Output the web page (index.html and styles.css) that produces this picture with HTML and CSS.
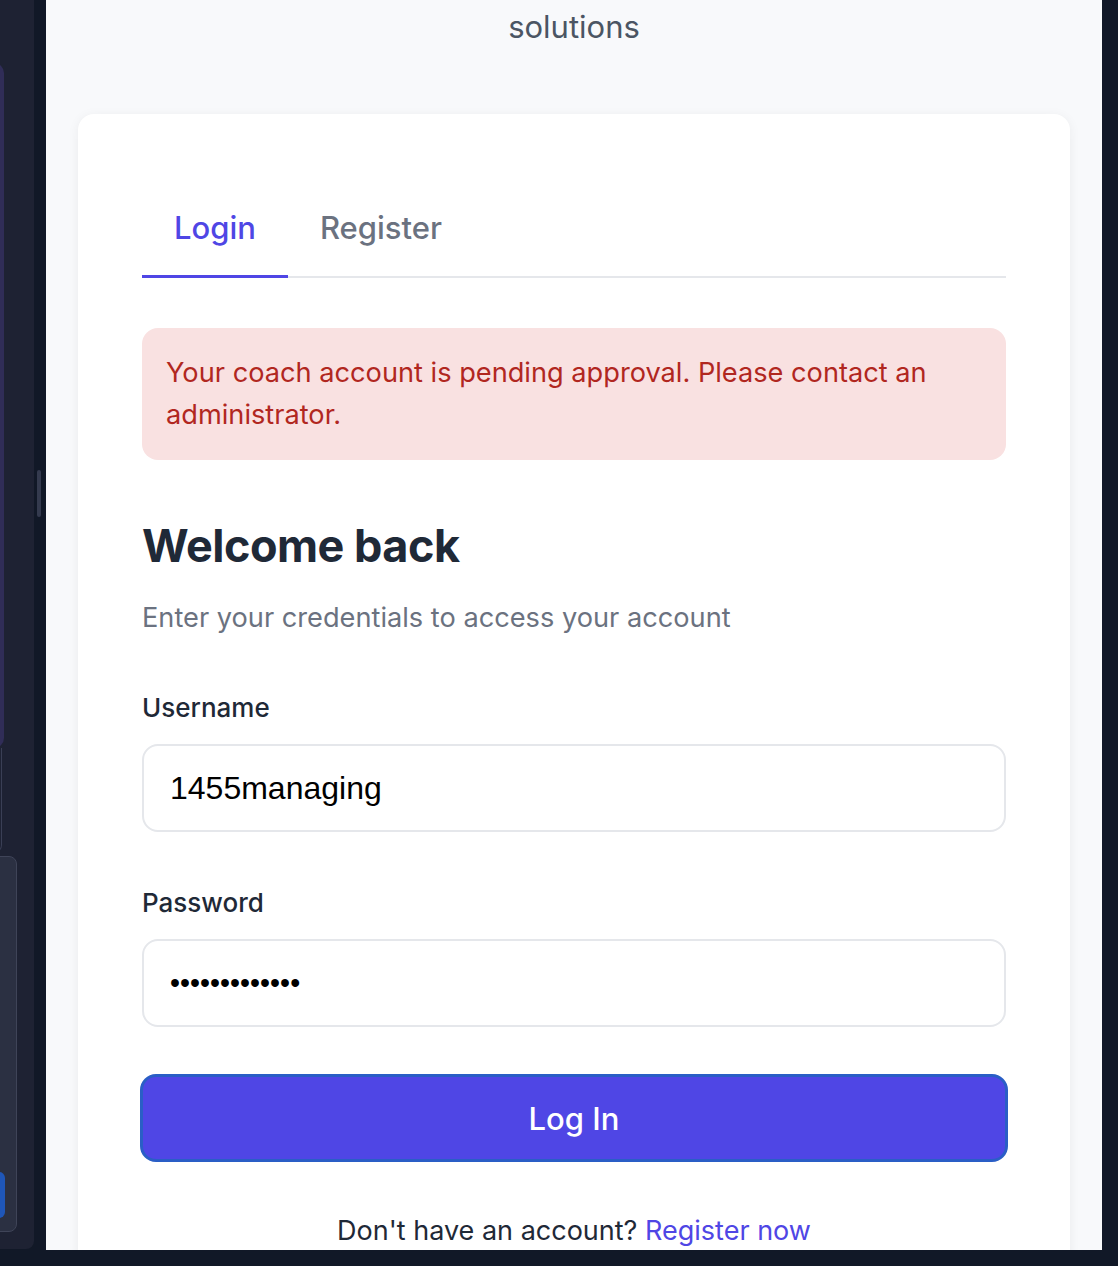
FILE: index.html
```html
<!DOCTYPE html>
<html lang="en">
<head>
<meta charset="utf-8">
<title>Login</title>
<link rel="stylesheet" href="styles.css">
</head>
<body>
<div class="app">
  <aside class="sidebar">
    <div class="side-box side-box-top"></div>
    <div class="side-line"></div>
    <div class="side-box side-box-bottom">
      <div class="side-btn"></div>
    </div>
  </aside>
  <div class="gutter"><div class="thumb"></div></div>
  <main class="main">
    <p class="subtitle">solutions</p>
    <section class="card">
      <nav class="tabs">
        <a class="tab active">Login</a>
        <a class="tab">Register</a>
      </nav>
      <div class="alert">Your coach account is pending approval. Please contact an administrator.</div>
      <h1 class="title">Welcome back</h1>
      <p class="lead">Enter your credentials to access your account</p>
      <form class="form">
        <label class="field">
          <span class="label">Username</span>
          <input class="input" type="text" value="1455managing">
        </label>
        <label class="field">
          <span class="label">Password</span>
          <input class="input input-password" type="password" value="abcdefghijklm">
        </label>
        <button class="btn" type="button">Log In</button>
      </form>
      <p class="footer">Don't have an account? <a class="link">Register now</a></p>
    </section>
  </main>
</div>
</body>
</html>
```
FILE: styles.css
```css
* { box-sizing: border-box; }
html, body { margin: 0; padding: 0; }
body {
  background: #111827;
  font-family: Inter, "Noto Sans", sans-serif;
  width: 1118px;
  height: 1266px;
  overflow: hidden;
}
.app {
  display: flex;
  height: 1250px;
  width: 1118px;
}
.sidebar {
  width: 34px;
  height: 1249px;
  background: #1e2233;
  border-bottom-right-radius: 8px;
  overflow: hidden;
  display: flex;
  flex-direction: column;
  flex-shrink: 0;
}
.side-box-top {
  margin-top: 63px;
  margin-left: -40px;
  width: 44px;
  height: 685px;
  background: #302d57;
  border-radius: 10px;
}
.side-line {
  margin-left: -40px;
  width: 42px;
  height: 105px;
  border-right: 1px solid #3a3f55;
  border-bottom: 1px solid #3a3f55;
  border-bottom-right-radius: 8px;
}
.side-box-bottom {
  margin-top: 3px;
  margin-left: -40px;
  width: 57px;
  height: 376px;
  background: #2b3042;
  border: 1px solid #3f4458;
  border-radius: 8px;
  display: flex;
  flex-direction: column;
  justify-content: flex-end;
  padding-bottom: 13px;
}
.side-btn {
  width: 44px;
  height: 46px;
  background: #1f56b8;
  border-radius: 6px;
}
.gutter {
  width: 12px;
  flex-shrink: 0;
  padding-top: 470px;
  display: flex;
  justify-content: center;
}
.thumb {
  width: 4px;
  height: 47px;
  border-radius: 2px;
  background: #343a4e;
  margin-left: -2px;
}
.main {
  width: 1056px;
  height: 1250px;
  background: #f8f9fb;
  flex-shrink: 0;
  overflow: hidden;
  padding: 0 32px;
}
.subtitle {
  margin: 0;
  padding-top: 8px;
  text-align: center;
  color: #4b5563;
  font-size: 31px;
  line-height: 38px;
  height: 114px;
}
.card {
  background: #fff;
  border-radius: 16px;
  box-shadow: 0 2px 12px rgba(17, 24, 39, 0.06);
  padding: 82px 64px 40px;
  min-height: 1200px;
}
.tabs {
  display: flex;
  border-bottom: 2px solid #e5e7eb;
}
.tab {
  font-size: 31px;
  line-height: 40px;
  padding: 12px 32px 27px 32px;
  color: #6b7280;
  font-weight: 500;
  margin-bottom: -2px;
  border-bottom: 3px solid transparent;
}
.tab.active {
  color: #4f46e5;
  border-bottom-color: #4f46e5;
}
.alert {
  margin-top: 50px;
  background: #f9e1e1;
  color: #b1271f;
  border-radius: 16px;
  padding: 24px 24px;
  font-size: 27.2px;
  line-height: 42px;
}
.title {
  margin: 58px 0 0;
  font-size: 45px;
  line-height: 56px;
  font-weight: 700;
  color: #1f2937;
  letter-spacing: -0.5px;
}
.lead {
  margin: 24px 0 0;
  font-size: 27.2px;
  line-height: 40px;
  color: #6b7280;
}
.form {
  display: flex;
  flex-direction: column;
}
.field {
  display: flex;
  flex-direction: column;
  margin-top: 54px;
}
.field + .field { margin-top: 55px; }
.label {
  font-size: 26px;
  line-height: 32px;
  font-weight: 500;
  color: #1f2937;
  margin-bottom: 20px;
}
.input {
  height: 88px;
  border: 2px solid #e5e7eb;
  border-radius: 16px;
  padding: 0 26px;
  font-family: "Liberation Sans", Arial, sans-serif;
  font-size: 32px;
  color: #000;
  background: #fff;
  outline: none;
}
.input-password {
  font-size: 28.6px;
}
.btn {
  margin: 47px -2px 0;
  height: 88px;
  background: #4f46e5;
  border: 3px solid #2a5ec6;
  border-radius: 16px;
  color: #fff;
  font-family: Inter, "Noto Sans", sans-serif;
  font-size: 31px;
  font-weight: 500;
}
.footer {
  margin: 51px 0 0;
  text-align: center;
  font-size: 27px;
  line-height: 36px;
  color: #1f2937;
}
.link { color: #4f46e5; }
```
